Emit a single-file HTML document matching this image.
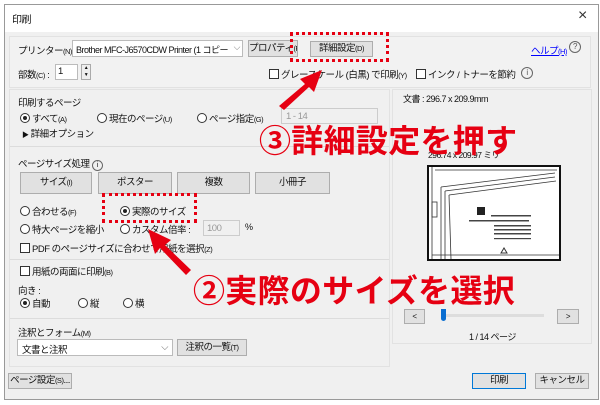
<!DOCTYPE html>
<html><head><meta charset="utf-8"><style>
*{margin:0;padding:0;box-sizing:border-box}
body{width:600px;height:405px;background:#fff;font-family:"Liberation Sans","Noto Sans CJK JP",sans-serif;font-size:9.5px;letter-spacing:-0.5px;color:#111;position:relative;overflow:hidden}
.a{position:absolute;white-space:nowrap}
.btn{position:absolute;background:#e1e1e1;border:1px solid #adadad;text-align:center;font-size:9.5px;white-space:nowrap;overflow:hidden}
.rad{display:inline-block;width:10px;height:10px;border:1px solid #333;border-radius:50%;vertical-align:-1px;margin-right:2px;background:#fff;position:relative}
.rad.on::after{content:"";position:absolute;left:2px;top:2px;width:4px;height:4px;border-radius:50%;background:#222}
.chk{display:inline-block;width:10px;height:10px;border:1px solid #333;vertical-align:-1px;margin-right:2px;background:#fff}
.s{font-size:7.5px}
.hr{position:absolute;height:1px;background:#dcdcdc}
.red{position:absolute;color:#e60012;font-weight:bold;font-size:32px;white-space:nowrap;letter-spacing:0.3px;line-height:1}
.dot{position:absolute;border:3px dotted #e60012}
</style></head><body>
<div class="a" style="left:4px;top:4px;width:595px;height:396px;border:1px solid #999;background:#f0f0f0"></div>
<div class="a" style="left:5px;top:5px;width:593px;height:27px;background:#fff"></div>
<div class="a" style="left:12px;top:11px;font-size:10px">印刷</div>
<div class="a" style="left:578px;top:7px;font-size:16px;color:#333">×</div>
<div class="a" style="left:9px;top:36px;width:582px;height:52px;background:#f2f2f2;border:1px solid #e2e2e2"></div>
<div class="a" style="left:18px;top:43px">プリンター<span class="s">(N)</span> :</div>
<div class="a" style="left:72px;top:40px;width:171px;height:17px;background:#fff;border:1px solid #bbb;padding:2px 3px;font-size:9px;overflow:hidden">Brother MFC-J6570CDW Printer (1 コピー<span style="position:absolute;right:2px;top:1px;background:#fff;color:#777;padding-left:2px">⌵</span></div>
<div class="btn" style="left:248px;top:40px;width:50px;height:17px;line-height:15px">プロパティ<span class="s">(P)</span></div>
<div class="btn" style="left:310px;top:41px;width:63px;height:16px;line-height:14px">詳細設定<span class="s">(D)</span></div>
<div class="a" style="left:531px;top:43px;color:#00f;text-decoration:underline">ヘルプ<span class="s">(H)</span></div>
<div class="a" style="left:569px;top:41px;width:12px;height:12px;border:1px solid #666;border-radius:50%;font-size:8px;text-align:center;line-height:10px;color:#555">?</div>
<div class="a" style="left:18px;top:67px">部数<span class="s">(C)</span> :</div>
<div class="a" style="left:55px;top:64px;width:23px;height:16px;background:#fff;border:1px solid #bbb;padding:1px 2px">1</div>
<div class="a" style="left:81px;top:64px;width:10px;height:16px;border:1px solid #aaa;background:#eee;font-size:5px;line-height:7px;text-align:center">▲<br>▼</div>
<div class="a" style="left:269px;top:67px"><span class="chk"></span>グレースケール (白黒) で印刷<span class="s">(Y)</span></div>
<div class="a" style="left:416px;top:67px"><span class="chk"></span>インク / トナーを節約</div>
<div class="a" style="left:521px;top:67px;width:12px;height:12px;border:1px solid #666;border-radius:50%;font-size:8px;text-align:center;line-height:10px;color:#555">i</div>

<div class="a" style="left:9px;top:89px;width:381px;height:278px;background:#f0f0f0;border:1px solid #e2e2e2"></div>
<div class="a" style="left:18px;top:95px">印刷するページ</div>
<div class="a" style="left:20px;top:111px"><span class="rad on"></span>すべて<span class="s">(A)</span></div>
<div class="a" style="left:97px;top:111px"><span class="rad"></span>現在のページ<span class="s">(U)</span></div>
<div class="a" style="left:197px;top:111px"><span class="rad"></span>ページ指定<span class="s">(G)</span></div>
<div class="a" style="left:281px;top:108px;width:97px;height:16px;border:1px solid #ccc;color:#999;padding:2px 4px">1 - 14</div>
<div class="a" style="left:22px;top:126px"><span style="font-size:7px">▶</span> 詳細オプション</div>
<div class="hr" style="left:10px;top:146px;width:379px"></div>
<div class="a" style="left:18px;top:156px">ページサイズ処理 <span style="display:inline-block;width:11px;height:11px;border:1px solid #666;border-radius:50%;font-size:7px;text-align:center;line-height:9px">i</span></div>
<div class="btn" style="left:20px;top:172px;width:72px;height:22px;line-height:20px">サイズ<span class="s">(I)</span></div>
<div class="btn" style="left:98px;top:172px;width:74px;height:22px;line-height:20px">ポスター</div>
<div class="btn" style="left:177px;top:172px;width:73px;height:22px;line-height:20px">複数</div>
<div class="btn" style="left:255px;top:172px;width:75px;height:22px;line-height:20px">小冊子</div>
<div class="a" style="left:20px;top:204px"><span class="rad"></span>合わせる<span class="s">(F)</span></div>
<div class="a" style="left:120px;top:204px"><span class="rad on"></span>実際のサイズ</div>
<div class="a" style="left:20px;top:222px"><span class="rad"></span>特大ページを縮小</div>
<div class="a" style="left:120px;top:222px"><span class="rad"></span>カスタム倍率 :</div>
<div class="a" style="left:203px;top:220px;width:37px;height:16px;border:1px solid #ccc;color:#999;padding:2px 3px">100</div>
<div class="a" style="left:245px;top:222px;font-size:9px">%</div>
<div class="a" style="left:20px;top:241px"><span class="chk"></span>PDF のページサイズに合わせて用紙を選択<span class="s">(Z)</span></div>
<div class="hr" style="left:10px;top:259px;width:379px"></div>
<div class="a" style="left:20px;top:264px"><span class="chk"></span>用紙の両面に印刷<span class="s">(B)</span></div>
<div class="a" style="left:18px;top:283px">向き :</div>
<div class="a" style="left:20px;top:296px"><span class="rad on"></span>自動</div>
<div class="a" style="left:78px;top:296px"><span class="rad"></span>縦</div>
<div class="a" style="left:123px;top:296px"><span class="rad"></span>横</div>
<div class="hr" style="left:10px;top:318px;width:379px"></div>
<div class="a" style="left:18px;top:325px">注釈とフォーム<span class="s">(M)</span></div>
<div class="a" style="left:17px;top:339px;width:156px;height:17px;background:#fff;border:1px solid #bbb;padding:2px 4px">文書と注釈<span style="position:absolute;right:4px;color:#777">⌵</span></div>
<div class="btn" style="left:177px;top:339px;width:70px;height:17px;line-height:15px">注釈の一覧<span class="s">(T)</span></div>

<div class="a" style="left:392px;top:89px;width:200px;height:255px;background:#f0f0f0;border:1px solid #e2e2e2"></div>
<div class="a" style="left:403px;top:92px;font-size:9px">文書 : 296.7 x 209.9mm</div>
<div class="a" style="left:428px;top:149px;font-size:8.5px">296.74 x 209.97 ミリ</div>
<div class="a" style="left:427px;top:165px;width:134px;height:96px;border:2px solid #111;background:#fff;overflow:hidden">
<svg width="130" height="92" viewBox="0 0 130 92"><g fill="none" stroke="#333" stroke-width="0.8"><path d="M3 0V92M6 3H128M12 20L126 6M16 24L126 10M20 28L127 14M12 20V92M16 24V92M20 28L22 92M3 88H130"/><rect x="3" y="35" width="5" height="15"/></g><rect x="48" y="40" width="8" height="8" fill="#222"/><g fill="#444"><rect x="62" y="48" width="40" height="1.5"/><rect x="40" y="53" width="60" height="1.5"/><rect x="65" y="58" width="37" height="1.5"/><rect x="65" y="62" width="37" height="1.5"/><rect x="65" y="66" width="37" height="1.5"/><rect x="65" y="71" width="37" height="1.2"/></g><path d="M72 86l3-5 3 5z" fill="none" stroke="#333"/></svg></div>
<div class="btn" style="left:404px;top:309px;width:21px;height:15px;font-size:8px;line-height:13px">&lt;</div>
<div class="btn" style="left:557px;top:309px;width:22px;height:15px;font-size:8px;line-height:13px">&gt;</div>
<div class="a" style="left:441px;top:314px;width:103px;height:3px;background:#ddd"></div>
<div class="a" style="left:441px;top:309px;width:5px;height:12px;background:#0a6ed1;border-radius:0 0 3px 3px"></div>
<div class="a" style="left:469px;top:330px;font-size:9px">1 / 14 ページ</div>

<div class="btn" style="left:8px;top:373px;width:64px;height:16px;line-height:14px">ページ設定<span class="s">(S)</span>...</div>
<div class="btn" style="left:472px;top:373px;width:54px;height:16px;line-height:14px;border-color:#0078d7">印刷</div>
<div class="btn" style="left:535px;top:373px;width:54px;height:16px;line-height:14px">キャンセル</div>

<div class="dot" style="left:290px;top:32px;width:99px;height:30px"></div>
<div class="dot" style="left:102px;top:193px;width:95px;height:30px"></div>
<svg class="a" style="left:0;top:0" width="600" height="405"><g fill="#e60012" stroke="none">
<path d="M279 106L305 84L300 79L322 70L314 92L309 87L284 110z"/>
<path d="M186 275L160 248L155 254L148 229L171 240L165 245L191 270z"/></g></svg>
<div class="red" style="left:259px;top:125px">③詳細設定を押す</div>
<div class="red" style="left:193px;top:275px">②実際のサイズを選択</div>
</body></html>
